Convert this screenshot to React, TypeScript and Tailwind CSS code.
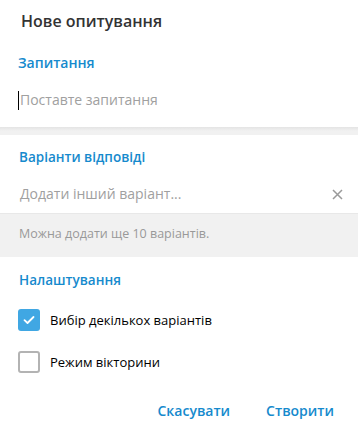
import React from "react";

export default function App() {
  const font = { fontFamily: '"Open Sans", "Noto Sans", sans-serif' };
  return (
    <div className="w-[358px] h-[435px] bg-white overflow-hidden" style={font}>
      {/* Section 1 */}
      <div className="h-[127px] bg-white px-[18px] pt-[11px]">
        <div className="text-[16px] leading-5 font-semibold text-[#333333] pl-[3px]">Нове опитування</div>
        <div className="mt-[22px] text-[14px] leading-5 font-semibold text-[#168acd]">Запитання</div>
        <div className="mt-[17px] flex items-center h-5">
          <div className="w-px h-[19px] bg-black mr-px" />
          <span className="text-[14px] leading-5 text-[#a0a0a0]">Поставте запитання</span>
        </div>
      </div>
      <div className="h-[8px] bg-[#f1f1f1] bg-gradient-to-b from-[#e4e4e4] to-[#f1f1f1] via-[#f1f1f1]" />
      {/* Section 2 */}
      <div className="bg-white px-[19px] pt-[12px] pb-[8px] h-[78px]">
        <div className="text-[13.5px] leading-5 font-semibold text-[#168acd]">Варіанти відповіді</div>
        <div className="mt-[17px] flex items-center justify-between h-5">
          <span className="text-[14px] leading-5 text-[#a0a0a0] pl-px">Додати інший варіант...</span>
          <svg width="11" height="11" viewBox="0 0 11 11" className="mr-[-4px]">
            <path d="M1 1 L10 10 M10 1 L1 10" stroke="#9a9a9a" strokeWidth="1.5" fill="none" />
          </svg>
        </div>
      </div>
      <div className="h-[44px] bg-[#f1f1f1] border-t border-[#e8e8e8] px-[19px] pt-[11px]">
        <div className="text-[12.5px] leading-[18px] text-[#999999]">Можна додати ще 10 варіантів.</div>
      </div>
      {/* Section 3 */}
      <div className="bg-white px-[18px] pt-[13px]">
        <div className="text-[13.5px] leading-5 font-semibold text-[#168acd] pl-px">Налаштування</div>
        <div className="mt-[19px] flex flex-col gap-[20px]">
          <div className="flex items-center gap-[10px]">
            <div className="w-[22px] h-[22px] rounded-[3px] bg-[#40a7e3] flex items-center justify-center">
              <svg width="12" height="10" viewBox="0 0 12 10">
                <path d="M1.5 5.2 L4.5 8 L10.5 2" stroke="white" strokeWidth="1.8" fill="none" strokeLinecap="round" strokeLinejoin="round" />
              </svg>
            </div>
            <span className="text-[13px] leading-5 text-black">Вибір декількох варіантів</span>
          </div>
          <div className="flex items-center gap-[10px]">
            <div className="w-[22px] h-[22px] rounded-[3px] border-2 border-[#b3b3b3] bg-white" />
            <span className="text-[13px] leading-5 text-black">Режим вікторини</span>
          </div>
        </div>
        <div className="mt-[28px] flex justify-end gap-[36px] pr-[6px]">
          <span className="text-[14px] leading-5 font-semibold text-[#168acd]">Скасувати</span>
          <span className="text-[14px] leading-5 font-semibold text-[#168acd]">Створити</span>
        </div>
      </div>
    </div>
  );
}
